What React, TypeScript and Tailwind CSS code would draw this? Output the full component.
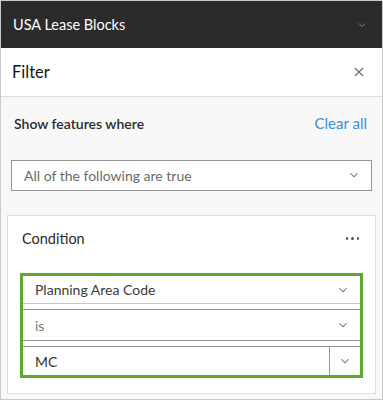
const Chevron = ({ className = "" }: { className?: string }) => (
  <svg viewBox="0 0 16 16" className={className} fill="none" stroke="currentColor" strokeWidth="1.2">
    <path d="M4 6l4 4 4-4" />
  </svg>
);

function Select({
  label,
  tone = "text-[#323232]",
  split,
  className = "h-[31px] border border-[#959595]",
}: {
  label: string;
  tone?: string;
  split?: boolean;
  className?: string;
}) {
  return (
    <div className={`flex items-center bg-white ${className}`}>
      <span className={`flex-1 pl-[12px] text-[14px] ${tone}`}>{label}</span>
      {split ? (
        <span className="flex h-full w-[31px] items-center justify-center border-l border-[#959595] text-[#6a6a6a]">
          <Chevron className="h-[14px] w-[14px]" />
        </span>
      ) : (
        <Chevron className="mr-[10px] h-[14px] w-[14px] text-[#6a6a6a]" />
      )}
    </div>
  );
}

export default function App() {
  return (
    <div className="h-[400px] w-[383px] overflow-hidden border border-[#cacaca] bg-[#f8f8f8] font-['Lato',sans-serif]">
      <div className="flex h-[47px] items-center justify-between bg-[#2b2b2b] pl-[12px] pr-[14px]">
        <span className="text-[14.5px] text-white">USA Lease Blocks</span>
        <Chevron className="h-[12px] w-[12px] text-[#8c8c8c]" />
      </div>
      <div className="flex h-[49px] items-center justify-between border-b border-[#dcdcdc] bg-white pl-[11px] pr-[18px]">
        <span className="text-[16.5px] text-[#151515]">Filter</span>
        <svg viewBox="0 0 10 10" className="h-[10px] w-[10px] text-[#6a6a6a]" stroke="currentColor" strokeWidth="1.1">
          <path d="M1 1l8 8M9 1l-8 8" />
        </svg>
      </div>
      <div className="px-[10px] pt-[15px]">
        <div className="flex items-center justify-between pl-[3px] pr-[5px]">
          <span className="text-[14px] font-semibold text-[#2b2b2b]">Show features where</span>
          <span className="text-[15px] text-[#3b8fd0]">Clear all</span>
        </div>
        <div className="mt-[25px]">
          <Select label="All of the following are true" tone="text-[#6a6a6a]" />
        </div>
      </div>
      <div className="mx-[6px] mt-[24px] h-[179px] border border-[#dcdcdc] bg-white px-[12px] pt-[12px]">
        <div className="flex items-center justify-between pl-[2px] pr-[4px]">
          <span className="text-[14.5px] text-[#2b2b2b]">Condition</span>
          <span className="flex gap-[3px]">
            <span className="h-[2.5px] w-[2.5px] rounded-full bg-[#555]" />
            <span className="h-[2.5px] w-[2.5px] rounded-full bg-[#555]" />
            <span className="h-[2.5px] w-[2.5px] rounded-full bg-[#555]" />
          </span>
        </div>
        <div className="mt-[24px] flex flex-col gap-[5px] border-[3px] border-[#5fa82f]">
          <Select
            label="Planning Area Code"
            tone="text-[#3a3a3a]"
            className="h-[28px] border-b border-[#c8c8c8]"
          />
          <Select
            label="is"
            tone="text-[#7a7a7a]"
            className="h-[32px] border-y border-[#959595]"
          />
          <Select label="MC" split className="h-[29px] border-t border-[#959595]" />
        </div>
      </div>
    </div>
  );
}
